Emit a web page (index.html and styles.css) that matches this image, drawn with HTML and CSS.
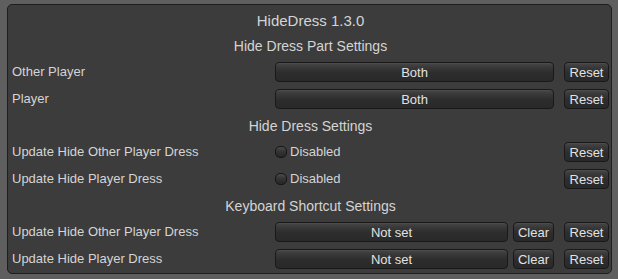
FILE: index.html
```html
<html>

<head>
  <title>HideDress 1.3.0</title>
  <link rel="stylesheet" href="styles.css">
</head>

<body>
  <div class="window">
    <div class="title">HideDress 1.3.0</div>

    <div class="section-title first">Hide Dress Part Settings</div>
    <div class="rows">
      <div class="row">
        <span class="label">Other Player</span>
        <button class="btn wide">Both</button>
        <button class="btn">Reset</button>
      </div>
      <div class="row">
        <span class="label">Player</span>
        <button class="btn wide">Both</button>
        <button class="btn">Reset</button>
      </div>
    </div>

    <div class="section-title">Hide Dress Settings</div>
    <div class="rows">
      <div class="row">
        <span class="label">Update Hide Other Player Dress</span>
        <label class="toggle"><span class="check"></span>Disabled</label>
        <button class="btn">Reset</button>
      </div>
      <div class="row">
        <span class="label">Update Hide Player Dress</span>
        <label class="toggle"><span class="check"></span>Disabled</label>
        <button class="btn">Reset</button>
      </div>
    </div>

    <div class="section-title">Keyboard Shortcut Settings</div>
    <div class="rows">
      <div class="row">
        <span class="label">Update Hide Other Player Dress</span>
        <div class="shortcut">
          <button class="btn wide">Not set</button>
          <button class="btn">Clear</button>
        </div>
        <button class="btn">Reset</button>
      </div>
      <div class="row">
        <span class="label">Update Hide Player Dress</span>
        <div class="shortcut">
          <button class="btn wide">Not set</button>
          <button class="btn">Clear</button>
        </div>
        <button class="btn">Reset</button>
      </div>
    </div>
  </div>
</body>

</html>
```

FILE: styles.css
```css
body {
  margin: 0;
  background: #5f5f5f;
  font-family: 'Liberation Sans', Arial, sans-serif;
  color: #d4d4d4;
}

.window {
  box-sizing: border-box;
  width: 605px;
  height: 270px;
  margin: 4px 0 0 7px;
  padding: 6px 2px 0 4px;
  background: #3c3c3c;
  border: 1px solid #1e1e1e;
  border-radius: 5px;
}

.title {
  font-size: 15px;
  line-height: 20px;
  text-align: center;
}

.section-title {
  font-size: 14px;
  line-height: 20px;
  text-align: center;
  margin: 7.5px 0 6px;
}

.section-title.first {
  margin-top: 5px;
}

.rows {
  display: flex;
  flex-direction: column;
  gap: 6.5px;
}

.row {
  display: grid;
  grid-template-columns: 1fr 279px 45px;
  column-gap: 10px;
  height: 20px;
  font-size: 13px;
  line-height: 20px;
}

.label {
  white-space: nowrap;
}

.btn {
  box-sizing: border-box;
  height: 20px;
  padding: 0;
  font: inherit;
  color: #e2e2e2;
  border: 1px solid #191919;
  border-radius: 4px;
  background: linear-gradient(#474747 0%, #383838 25%, #2d2d2d 55%, #292929 100%);
  box-shadow: inset 0 1px 0 #4c4c4c;
  cursor: pointer;
}

.shortcut {
  display: grid;
  grid-template-columns: 233px 41px;
  column-gap: 5px;
}

.toggle {
  display: flex;
  align-items: center;
}

.check {
  box-sizing: border-box;
  width: 12px;
  height: 12px;
  margin-right: 3px;
  border: 1px solid #151515;
  border-radius: 5px;
  background: linear-gradient(#4a4a4a 0%, #343434 45%, #262626 100%);
}
```
